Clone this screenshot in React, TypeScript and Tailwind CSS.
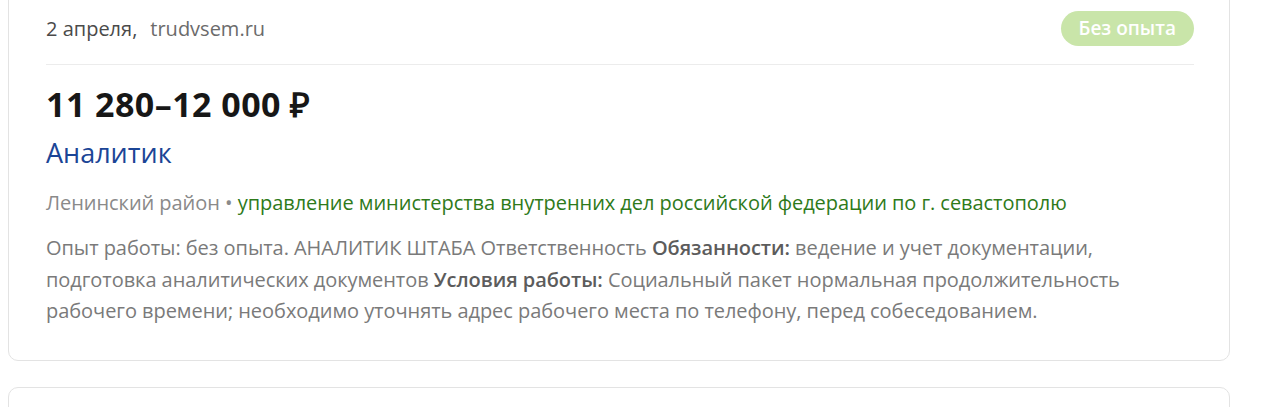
export default function App() {
  return (
    <div className="h-screen overflow-hidden bg-white pl-2 pr-[45px] font-['Open_Sans',sans-serif]">
      {/* Vacancy card */}
      <div className="-mt-3 rounded-[10px] border border-[#e3e3e3] bg-white pb-[33px] pl-[37px] pr-[35px] pt-[22px]">
        <div className="flex items-center justify-between border-b border-[#ececec] pb-[18px]">
          <div className="flex items-center gap-[13px] text-[20px] leading-7 text-[#4a4a4a]">
            <span>2 апреля,</span>
            <span className="text-[#6b6b6b]">trudvsem.ru</span>
          </div>
          <span className="flex h-[35px] items-center rounded-full bg-[#c9e5a9] px-[18px] text-[19px] font-semibold text-white">
            Без опыта
          </span>
        </div>

        <div className="mt-[21px] text-[34px] font-bold leading-[36px] tracking-[0.45px] text-[#171717]">
          11 280–12 000 ₽
        </div>

        <a className="mt-[15px] block text-[27px] leading-[32px] text-[#1b4596]">Аналитик</a>

        <div className="mt-[22px] whitespace-nowrap text-[20px] leading-6 tracking-[-0.05px] text-[#8a8a8a]">
          Ленинский район <span className="text-[#8a8a8a]">•</span>{" "}
          <span className="text-[#2e7a1a]">
            управление министерства внутренних дел российской федерации по г. севастополю
          </span>
        </div>

        <p className="mt-[17px] whitespace-nowrap text-[20px] leading-[31.5px] tracking-[-0.05px] text-[#7a7a7a]">
          Опыт работы: без опыта. АНАЛИТИК ШТАБА Ответственность{" "}
          <b className="font-semibold text-[#5c5c5c]">Обязанности:</b> ведение и учет документации,
          <br />
          подготовка аналитических документов{" "}
          <b className="font-semibold text-[#5c5c5c]">Условия работы:</b> Социальный пакет нормальная
          продолжительность
          <br />
          рабочего времени; необходимо уточнять адрес рабочего места по телефону, перед собеседованием.
        </p>
      </div>

      {/* Next card peeking in */}
      <div className="mt-[26px] h-[60px] rounded-[10px] border border-[#e3e3e3] bg-white" />
    </div>
  );
}
